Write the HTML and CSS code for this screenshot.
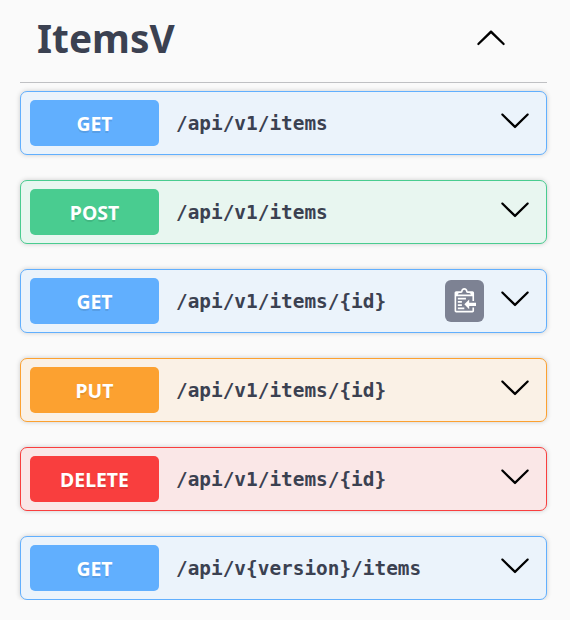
FILE: index.html
```html
<!DOCTYPE html>
<html lang="en">
<head>
<meta charset="utf-8">
<title>ItemsV</title>
<link rel="stylesheet" href="styles.css">
</head>
<body>
<svg class="defs" width="0" height="0" aria-hidden="true">
  <symbol id="down" viewBox="0 0 20 20"><path d="M17.418 6.109c.272-.268.709-.268.979 0s.271.701 0 .969l-7.908 7.830c-.27.268-.707.268-.979 0l-7.908-7.830c-.27-.268-.27-.701 0-.969.271-.268.709-.268.979 0L10 13.250z"/></symbol>
  <symbol id="up" viewBox="0 0 20 20"><path d="M17.418 14.908c.272.268.709.268.979 0s.271-.701 0-.969l-7.908-7.830c-.27-.268-.707-.268-.979 0l-7.908 7.830c-.27.268-.27.701 0 .969.271.268.709.268.979 0L10 7.767z"/></symbol>
</svg>
<main class="section">
  <header class="tag">
    <h1 class="tag-name">ItemsV</h1>
    <svg class="arrow"><use href="#up"/></svg>
  </header>
  <div class="operations">
    <div class="op get"><span class="method">GET</span><span class="path">/api/v1/items</span><svg class="arrow"><use href="#down"/></svg></div>
    <div class="op post"><span class="method">POST</span><span class="path">/api/v1/items</span><svg class="arrow"><use href="#down"/></svg></div>
    <div class="op get"><span class="method">GET</span><span class="path">/api/v1/items/{id}</span><span class="copy"><svg class="copy-icon" viewBox="0 0 15 16"><path transform="translate(2 -1)" fill-rule="evenodd" d="M2 13h4v1H2v-1zm5-6H2v1h5V7zm2 3V8l-3 3 3 3v-2h5v-2H9zM4.500 9H2v1h2.500V9zM2 12h2.500v-1H2v1zm9 1h1v2c-.02.28-.11.52-.3.7-.19.18-.42.28-.7.3H1c-.55 0-1-.45-1-1V4c0-.55.45-1 1-1h3c0-1.110.89-2 2-2 1.110 0 2 .89 2 2h3c.55 0 1 .45 1 1v5h-1V6H1v9h10v-2zM2 5h8c0-.55-.45-1-1-1H8c-.55 0-1-.45-1-1s-.45-1-1-1-1 .45-1 1-.45 1-1 1H3c-.55 0-1 .45-1 1z"/></svg></span><svg class="arrow"><use href="#down"/></svg></div>
    <div class="op put"><span class="method">PUT</span><span class="path">/api/v1/items/{id}</span><svg class="arrow"><use href="#down"/></svg></div>
    <div class="op delete"><span class="method">DELETE</span><span class="path">/api/v1/items/{id}</span><svg class="arrow"><use href="#down"/></svg></div>
    <div class="op get"><span class="method">GET</span><span class="path">/api/v{version}/items</span><svg class="arrow"><use href="#down"/></svg></div>
  </div>
</main>
</body>
</html>
```
FILE: styles.css
```css
* { box-sizing: border-box; }
body {
  margin: 0;
  background: #fafafa;
  color: #3b4151;
  font-family: "Noto Sans", sans-serif;
}
.defs { display: block; }
.section { padding: 0 23px 0 20px; }
.tag {
  display: flex;
  align-items: center;
  justify-content: space-between;
  height: 83px;
  padding: 0 40px 7px 17px;
  border-bottom: 1px solid #bfc0c3;
}
.tag .arrow { margin-bottom: 2px; }
.tag-name {
  margin: 0;
  font-size: 38.8px;
  font-weight: 700;
  line-height: 50px;
}
.arrow {
  flex: none;
  width: 32px;
  height: 32px;
  fill: #000;
}
.operations {
  display: flex;
  flex-direction: column;
  gap: 25px;
  padding-top: 8px;
}
.op {
  display: flex;
  align-items: center;
  height: 64px;
  padding: 0 15px 0 9px;
  border: 1px solid;
  border-radius: 7px;
  box-shadow: 0 0 5px rgba(0, 0, 0, .19);
}
.op .arrow { margin-bottom: 7px; }
.method {
  width: 129px;
  height: 46px;
  border-radius: 5px;
  color: #fff;
  font-size: 19.4px;
  font-weight: 700;
  line-height: 47px;
  text-align: center;
  text-shadow: 0 2px 0 rgba(0, 0, 0, .1);
}
.path {
  flex: 1;
  padding-left: 17px;
  font-family: "DejaVu Sans Mono", monospace;
  font-size: 19.4px;
  font-weight: 700;
}
.copy {
  display: flex;
  align-items: center;
  justify-content: center;
  width: 39px;
  height: 42px;
  margin-right: 15px;
  padding: 0 2px 1px 0;
  border-radius: 6px;
  background: #7d8293;
}
.copy-icon {
  width: 25px;
  height: 26px;
  fill: #fff;
}
.get { border-color: #61affe; background: #ebf3fb; }
.get .method { background: #61affe; }
.post { border-color: #49cc90; background: #e8f6f0; }
.post .method { background: #49cc90; }
.put { border-color: #fca130; background: #faf1e6; }
.put .method { background: #fca130; }
.delete { border-color: #f93e3e; background: #fae7e7; }
.delete .method { background: #f93e3e; }
```
